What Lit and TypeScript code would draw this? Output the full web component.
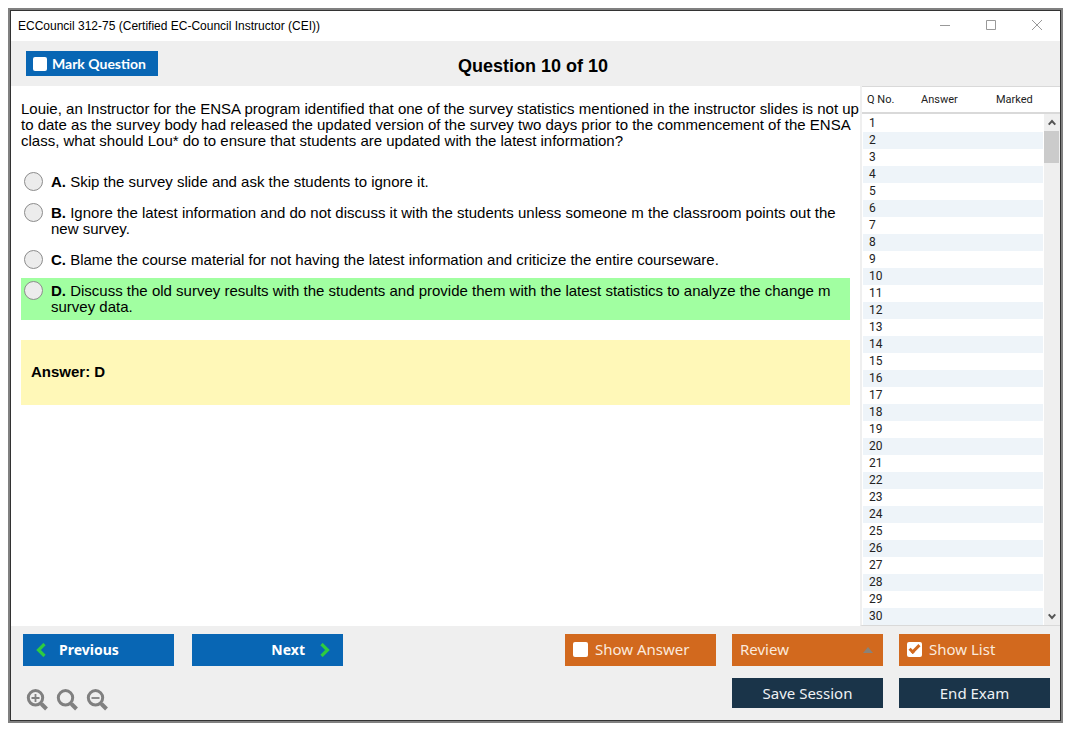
import { LitElement, html, css } from "lit";
import { customElement, property, state } from "lit/decorators.js";

interface Choice {
  key: string;
  text: string;
}

const QUESTION =
  "Louie, an Instructor for the ENSA program identified that one of the survey statistics mentioned in the instructor slides is not up to date as the survey body had released the updated version of the survey two days prior to the commencement of the ENSA class, what should Lou* do to ensure that students are updated with the latest information?";

const CHOICES: Choice[] = [
  { key: "A", text: "Skip the survey slide and ask the students to ignore it." },
  {
    key: "B",
    text: "Ignore the latest information and do not discuss it with the students unless someone m the classroom points out the new survey.",
  },
  {
    key: "C",
    text: "Blame the course material for not having the latest information and criticize the entire courseware.",
  },
  {
    key: "D",
    text: "Discuss the old survey results with the students and provide them with the latest statistics to analyze the change m survey data.",
  },
];

/** Table of question numbers with its scroll bar. */
@customElement("question-list")
export class QuestionList extends LitElement {
  @property({ type: Number }) count = 30;

  static styles = css`
    :host {
      display: grid;
      grid-template-columns: minmax(0, 1fr) 16px;
      border-left: 2px solid #efefef;
      border-bottom: 1px solid #d9d9d9;
      background: #fff;
      overflow: hidden;
      font: 12px/17px Roboto, "Liberation Sans", sans-serif;
      color: #222;
    }
    table {
      width: 100%;
      border-collapse: separate;
      border-spacing: 0;
      table-layout: fixed;
      align-self: start;
    }
    th {
      height: 25px;
      padding: 0;
      border-top: 1px solid #d9d9d9;
      border-bottom: 2px solid #d9d9d9;
      font-weight: 400;
      font-size: 11px;
      text-align: left;
    }
    .no {
      width: 59px;
      padding-left: 5px;
      box-sizing: border-box;
    }
    .answer {
      width: 75px;
    }
    td {
      height: 17px;
      padding: 0;
    }
    tbody tr:first-child td {
      padding-top: 1px;
    }
    td:first-child {
      padding-left: 6px;
      border-left: 1px solid #fff;
    }
    td:last-child {
      border-right: 1px solid #fff;
    }
    tbody tr:nth-child(even) {
      background: #eef4f9;
    }
    .side {
      display: flex;
      flex-direction: column;
    }
    .cap {
      height: 25px;
      border-top: 1px solid #d9d9d9;
      border-bottom: 2px solid #d9d9d9;
    }
    .bar {
      flex: 1;
      display: flex;
      flex-direction: column;
      background: #efefef;
    }
    .arrow {
      display: grid;
      place-items: center;
      height: 17px;
      padding: 0;
      border: 0;
      background: none;
    }
    .thumb {
      height: 32px;
      margin-right: 1px;
      background: #cbcbcb;
    }
    .track {
      flex: 1;
    }
    path {
      fill: none;
      stroke: #555;
      stroke-width: 2;
    }
  `;

  render() {
    const rows = Array.from({ length: this.count }, (_, i) => i + 1);
    return html`
      <table>
        <thead>
          <tr>
            <th class="no">Q No.</th>
            <th class="answer">Answer</th>
            <th>Marked</th>
          </tr>
        </thead>
        <tbody>
          ${rows.map((n) => html`<tr><td>${n}</td><td></td><td></td></tr>`)}
        </tbody>
      </table>
      <div class="side">
        <div class="cap"></div>
        <div class="bar">
          <button class="arrow" aria-label="Scroll up">
            <svg width="8" height="7" viewBox="0 0 8 7"><path d="M.7 5.7 4 2l3.300 3.700" /></svg>
          </button>
          <div class="thumb"></div>
          <div class="track"></div>
          <button class="arrow" aria-label="Scroll down">
            <svg width="8" height="7" viewBox="0 0 8 7"><path d="M.7 1.300 4 5l3.300-3.700" /></svg>
          </button>
        </div>
      </div>
    `;
  }
}

@customElement("app-root")
export class AppRoot extends LitElement {
  @state() private marked = false;
  @state() private showAnswer = false;
  @state() private showList = true;

  static styles = css`
    :host {
      display: flex;
      box-sizing: border-box;
      min-height: 100vh;
      padding: 8px 12px 12px 8px;
      background: #fff;
      color: #000;
      font-family: "Liberation Sans", Arial, sans-serif;
    }
    .frame {
      flex: 1;
      display: flex;
      border: 2px solid #808080;
    }
    .window {
      flex: 1;
      min-width: 0;
      display: flex;
      flex-direction: column;
      border: 1px solid #333;
    }
    .titlebar {
      display: flex;
      align-items: center;
      justify-content: space-between;
      height: 30px;
      padding: 0 16px 0 7px;
      font-size: 12px;
    }
    .controls {
      display: flex;
      gap: 32px;
      padding-bottom: 2px;
    }
    .controls button,
    .zoom button {
      display: block;
      padding: 0;
      border: 0;
      background: none;
    }
    .controls svg,
    .zoom svg {
      display: block;
    }
    .controls path {
      fill: none;
      stroke: #999;
    }
    .header {
      display: grid;
      grid-template-columns: 1fr auto 1fr;
      align-items: center;
      height: 45px;
      padding: 0 20px 0 15px;
      background: #efefef;
    }
    h1 {
      margin: 0;
      padding-top: 4px;
      font-size: 18px;
      line-height: 20px;
    }
    .body {
      flex: 1;
      display: flex;
    }
    main {
      flex: 1;
      padding: 15px 0 15px 10px;
      font-size: 15px;
      line-height: 16px;
    }
    p {
      margin: 0;
    }
    .choices {
      display: grid;
      gap: 5px;
      margin: 20px 10px 20px 0;
      padding: 0;
      border: 0;
    }
    .choice {
      display: flex;
      align-items: flex-start;
      gap: 8px;
      padding: 0 10px 0 3px;
    }
    .choice span {
      padding: 5px 0;
    }
    .correct {
      background: #a1ffa1;
    }
    .choice input {
      appearance: none;
      flex: none;
      width: 19px;
      height: 19px;
      margin: 3px 0 0;
      border: 1px solid #8c8c8c;
      border-radius: 50%;
      background: #ececec;
    }
    .choice input:checked {
      background: radial-gradient(#444 0 4px, #ececec 5px);
    }
    .key {
      box-sizing: border-box;
      display: flex;
      align-items: center;
      height: 65px;
      margin-right: 10px;
      padding: 0 10px 2px;
      background: #fff8b8;
      font-weight: 700;
    }
    question-list {
      flex: none;
      width: 198px;
    }
    .footer {
      display: flex;
      justify-content: space-between;
      padding: 8px 10px 12px 12px;
      background: #efefef;
    }
    .nav {
      display: grid;
      grid-template-columns: 151px 151px;
      grid-template-rows: 32px 30px;
      gap: 12px 18px;
    }
    .tools {
      display: grid;
      grid-template-columns: repeat(3, 151px);
      grid-template-rows: 32px 30px;
      gap: 12px 16px;
    }
    .btn {
      box-sizing: border-box;
      display: flex;
      align-items: center;
      margin: 0;
      border: 0;
      border-radius: 0;
      color: #fff;
      font: 15px/20px "Noto Sans", sans-serif;
    }
    .blue {
      padding: 0 13px;
      background: #0866b4;
      font-weight: 700;
      font-size: 14px;
      gap: 13px;
    }
    .next {
      justify-content: flex-end;
      gap: 15px;
    }
    .mark {
      justify-self: start;
      height: 25px;
      padding: 0 12px 0 7px;
      gap: 5px;
      font-family: Lato, sans-serif;
    }
    .orange {
      padding: 0 8px 2px;
      gap: 7px;
      background: #d2691e;
      color: #fbeadd;
    }
    .navy {
      justify-content: center;
      background: #1a3449;
      color: #eef1f4;
    }
    .save {
      grid-column: 2;
    }
    .check {
      appearance: none;
      flex: none;
      display: grid;
      place-items: center;
      width: 15px;
      height: 15px;
      margin: 0;
      border-radius: 2px;
      background: #fff;
    }
    .mark .check {
      width: 14px;
      height: 14px;
    }
    .check:checked::before {
      content: "";
      width: 8px;
      height: 3px;
      border: solid #d2691e;
      border-width: 0 0 3px 3px;
      transform: translateY(-1px) rotate(-45deg);
    }
    .review {
      display: grid;
      align-items: center;
    }
    .review select,
    .review svg {
      grid-area: 1 / 1;
    }
    .review select {
      appearance: none;
      width: 100%;
      height: 32px;
    }
    .review svg {
      justify-self: end;
      margin-right: 10px;
      pointer-events: none;
    }
    .zoom {
      display: flex;
      align-items: flex-start;
      gap: 8px;
      padding: 11px 0 0 3px;
    }
    .zoom svg {
      fill: none;
      stroke: #808080;
    }
  `;

  private zoomButton(label: string, sign: string) {
    return html`<button aria-label=${label}>
      <svg width="22" height="22" viewBox="0 0 22 22">
        <circle cx="9.500" cy="8.800" r="7.200" stroke-width="3" />
        <path d="M14.500 14l1.500 1.500" stroke-width="3" />
        <path d="M15.500 15l5 5" stroke-width="4" />
        <path d=${sign} stroke-width="1.800" />
      </svg>
    </button>`;
  }

  render() {
    return html`
      <div class="frame">
        <div class="window">
          <div class="titlebar">
            <span>ECCouncil 312-75 (Certified EC-Council Instructor (CEI))</span>
            <div class="controls">
              <button aria-label="Minimize">
                <svg width="14" height="12" viewBox="0 0 14 12"><path d="M2 6.500h10" /></svg>
              </button>
              <button aria-label="Maximize">
                <svg width="14" height="12" viewBox="0 0 14 12"><path d="M2.500 1.500h9v9h-9z" /></svg>
              </button>
              <button aria-label="Close">
                <svg width="14" height="12" viewBox="0 0 14 12"><path d="M2 1l10 10M12 1 2 11" /></svg>
              </button>
            </div>
          </div>

          <div class="header">
            <label class="btn blue mark">
              <input
                class="check"
                type="checkbox"
                .checked=${this.marked}
                @change=${() => (this.marked = !this.marked)}
              />
              Mark Question
            </label>
            <h1>Question 10 of 10</h1>
          </div>

          <div class="body">
            <main>
              <p>${QUESTION}</p>
              <fieldset class="choices" aria-label="Choices">
                ${CHOICES.map(
                  (c) => html`<label class="choice ${c.key === "D" ? "correct" : ""}">
                    <input type="radio" name="choice" value=${c.key} />
                    <span><b>${c.key}.</b> ${c.text}</span>
                  </label>`
                )}
              </fieldset>
              <div class="key">Answer: D</div>
            </main>
            ${this.showList ? html`<question-list .count=${30}></question-list>` : ""}
          </div>

          <div class="footer">
            <div class="nav">
              <button class="btn blue">
                <svg width="10" height="14" viewBox="0 0 10 14" fill="none" stroke="#2ecc40" stroke-width="3.200">
                  <path d="M8.500 1 2.500 7l6 6" />
                </svg>
                Previous
              </button>
              <button class="btn blue next">
                Next
                <svg width="10" height="14" viewBox="0 0 10 14" fill="none" stroke="#2ecc40" stroke-width="3.200">
                  <path d="M1.500 1l6 6-6 6" />
                </svg>
              </button>
              <div class="zoom">
                ${this.zoomButton("Zoom in", "M5.500 9h8M9.500 5v8")}
                ${this.zoomButton("Reset zoom", "")}
                ${this.zoomButton("Zoom out", "M5.500 9h8")}
              </div>
            </div>
            <div class="tools">
              <label class="btn orange">
                <input
                  class="check"
                  type="checkbox"
                  .checked=${this.showAnswer}
                  @change=${() => (this.showAnswer = !this.showAnswer)}
                />
                Show Answer
              </label>
              <div class="review">
                <select class="btn orange" aria-label="Review">
                  <option>Review</option>
                </select>
                <svg width="10" height="6" viewBox="0 0 10 6"><path d="M0 6 5 0l5 6z" fill="#8a8278" /></svg>
              </div>
              <label class="btn orange">
                <input
                  class="check"
                  type="checkbox"
                  .checked=${this.showList}
                  @change=${() => (this.showList = !this.showList)}
                />
                Show List
              </label>
              <button class="btn navy save">Save Session</button>
              <button class="btn navy">End Exam</button>
            </div>
          </div>
        </div>
      </div>
    `;
  }
}
